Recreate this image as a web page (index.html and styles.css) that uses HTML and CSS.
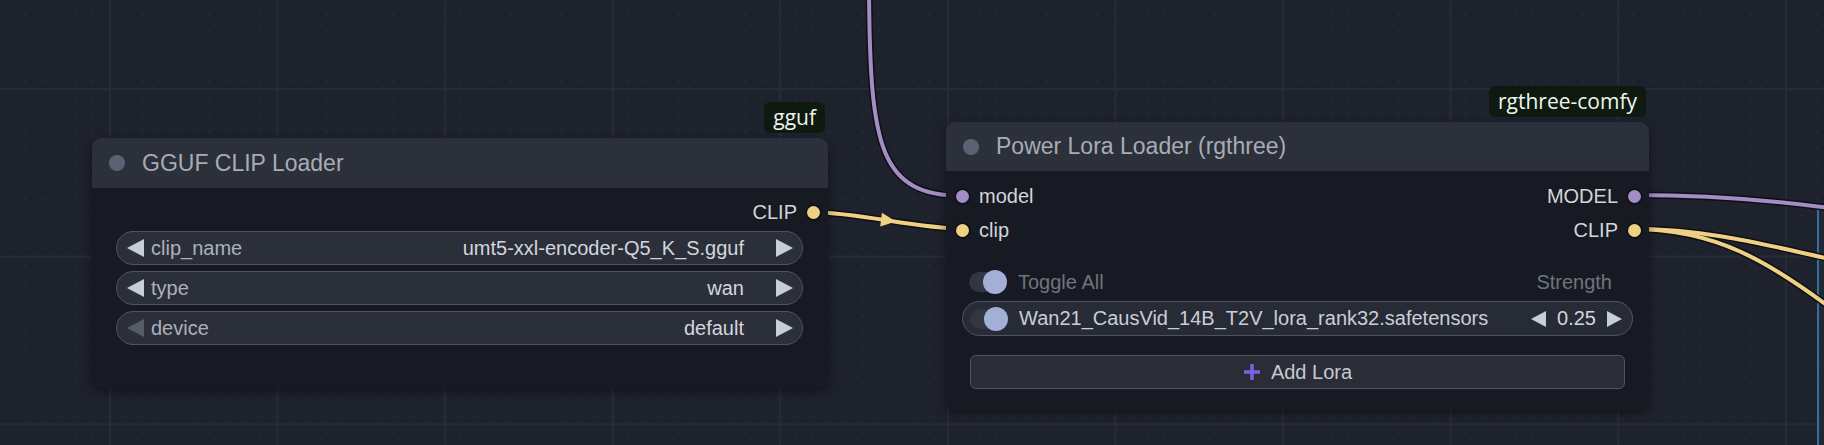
FILE: index.html
```html
<!DOCTYPE html>
<html lang="en">
<head>
    <meta charset="UTF-8">
    <meta name="viewport" content="width=device-width, initial-scale=1.0">
    <title>Graph canvas</title>
    <link rel="stylesheet" href="styles.css">
</head>
<body>

    <div class="canvas">

        <div class="group-edge"></div>

        <svg class="links" width="1824" height="445" viewBox="0 0 1824 445">
            <g class="link-shadow">
                <path d="M869 -10 C870 150, 880 195, 963 196"/>
                <path d="M813 212 C860 213, 916 228, 963 229"/>
                <path d="M1634 195 C1710 195, 1770 200, 1830 208"/>
                <path d="M1634 229 C1710 229, 1770 246, 1830 259"/>
                <path d="M1634 229 C1715 229, 1770 262, 1836 312"/>
            </g>
            <path class="link model" d="M869 -10 C870 150, 880 195, 963 196"/>
            <path class="link clip" d="M813 212 C860 213, 916 228, 963 229"/>
            <path class="link model" d="M1634 195 C1710 195, 1770 200, 1830 208"/>
            <path class="link clip" d="M1634 229 C1710 229, 1770 246, 1830 259"/>
            <path class="link clip" d="M1634 229 C1715 229, 1770 262, 1836 312"/>
            <polygon class="link-arrow" points="-7,-7 8,0 -7,7" transform="translate(888 220.5) rotate(7)"/>
        </svg>

        <!-- GGUF CLIP Loader -->
        <div class="node node-gguf">
            <div class="badge">gguf</div>
            <div class="node-title"><span class="title-dot"></span>GGUF CLIP Loader</div>
            <div class="node-body">
                <div class="slot-row">
                    <span class="slot out">CLIP <i class="dot clip"></i></span>
                </div>
                <div class="combo first">
                    <span class="arrow-l"></span>
                    <span class="combo-label">clip_name</span>
                    <span class="combo-value">umt5-xxl-encoder-Q5_K_S.gguf</span>
                    <span class="arrow-r"></span>
                </div>
                <div class="combo">
                    <span class="arrow-l"></span>
                    <span class="combo-label">type</span>
                    <span class="combo-value">wan</span>
                    <span class="arrow-r"></span>
                </div>
                <div class="combo">
                    <span class="arrow-l off"></span>
                    <span class="combo-label">device</span>
                    <span class="combo-value">default</span>
                    <span class="arrow-r"></span>
                </div>
            </div>
        </div>

        <!-- Power Lora Loader -->
        <div class="node node-lora">
            <div class="badge">rgthree-comfy</div>
            <div class="node-title"><span class="title-dot"></span>Power Lora Loader (rgthree)</div>
            <div class="node-body">
                <div class="slot-row">
                    <span class="slot in"><i class="dot model"></i> model</span>
                    <span class="slot out">MODEL <i class="dot model"></i></span>
                </div>
                <div class="slot-row">
                    <span class="slot in"><i class="dot clip"></i> clip</span>
                    <span class="slot out">CLIP <i class="dot clip"></i></span>
                </div>

                <div class="lora-head">
                    <span class="toggle"><i class="knob"></i></span>
                    <span class="dim">Toggle All</span>
                    <span class="dim strength">Strength</span>
                </div>

                <div class="lora-row">
                    <span class="toggle"><i class="knob"></i></span>
                    <span class="lora-name">Wan21_CausVid_14B_T2V_lora_rank32.safetensors</span>
                    <span class="lora-strength">
                        <span class="arrow-l small"></span>
                        <span>0.25</span>
                        <span class="arrow-r small"></span>
                    </span>
                </div>

                <div class="add-lora">
                    <svg width="18" height="18" viewBox="0 0 18 18"><path d="M9 1 V17 M1 9 H17" stroke="#7b61e0" stroke-width="3.5"/></svg>
                    Add Lora
                </div>
            </div>
        </div>

    </div>

</body>
</html>
```

FILE: styles.css
```css
body {
    margin: 0;
    overflow: hidden;
    font-family: "Liberation Sans", Arial, sans-serif;
    background-color: #1e222c;
}

.canvas {
    position: relative;
    width: 1824px;
    height: 445px;
    overflow: hidden;
    background-color: #1e222c;
    background-image:
        linear-gradient(to right, #272b36 2px, transparent 2px),
        linear-gradient(to bottom, #272b36 2px, transparent 2px),
        radial-gradient(circle, #242833 1px, transparent 1.6px);
    background-size: 167.6px 167.6px, 167.6px 167.6px, 16.76px 16.76px;
    background-position: 109px 0, 0 88px, 0 6px;
}

.group-edge {
    position: absolute;
    left: 1817px;
    top: 205px;
    width: 10px;
    height: 260px;
    border-left: 2px solid #3b6b96;
    background: #1f2a39;
}

/* links */

.links {
    position: absolute;
    left: 0;
    top: 0;
    pointer-events: none;
}

.links path {
    fill: none;
}

.link-shadow path {
    stroke: #0d0f14;
    stroke-width: 7;
}

.link {
    stroke-width: 4;
}

.link.model {
    stroke: #a28dc4;
}

.link.clip {
    stroke: #efd186;
}

.link-arrow {
    fill: #efd186;
}

/* nodes */

.node {
    position: absolute;
    display: flex;
    flex-direction: column;
    background: #171a22;
    border-radius: 9px;
    box-shadow: 0 3px 10px rgba(0, 0, 0, 0.45);
}

.node-gguf {
    left: 92px;
    top: 138px;
    width: 736px;
    height: 250px;
}

.node-lora {
    left: 946px;
    top: 122px;
    width: 703px;
    height: 288px;
}

.badge {
    position: absolute;
    right: 3px;
    bottom: calc(100% + 5px);
    height: 31px;
    padding: 0 9px;
    line-height: 30px;
    font-family: "Open Sans", "Noto Sans", sans-serif;
    font-size: 21px;
    color: #eef5ee;
    background: #0e1a10;
    border-radius: 6px;
}

.node-title {
    display: flex;
    align-items: center;
    height: 50px;
    flex-shrink: 0;
    background: #2c303b;
    border-radius: 9px 9px 0 0;
    font-size: 23px;
    color: #a8acb5;
}

.node-lora .node-title {
    height: 49px;
}

.title-dot {
    width: 16px;
    height: 16px;
    margin: 0 17px;
    border-radius: 50%;
    background: #5c6273;
}

.node-body {
    display: flex;
    flex-direction: column;
    padding: 7px 0 0;
}

.node-lora .node-body {
    padding-top: 8px;
}

.slot-row {
    display: flex;
    align-items: center;
    height: 34px;
    font-size: 20px;
    color: #d2d5db;
}

.slot {
    display: flex;
    align-items: center;
}

.slot.in {
    padding-left: 10px;
    gap: 10px;
}

.slot.out {
    margin-left: auto;
    padding-right: 8px;
    gap: 10px;
}

.dot {
    width: 13px;
    height: 13px;
    border-radius: 50%;
    box-shadow: 0 0 0 1.5px #0d0f14;
}

.dot.model {
    background: #a28dc4;
}

.dot.clip {
    background: #efd186;
}

/* combo widgets */

.combo {
    display: flex;
    align-items: center;
    height: 34px;
    margin: 0 25px 6px 24px;
    box-sizing: border-box;
    border: 1.5px solid #50545f;
    border-radius: 17px;
    background: #2b2f3a;
    font-size: 20px;
}

.combo.first {
    margin-top: 2px;
}

.arrow-l,
.arrow-r {
    width: 0;
    height: 0;
    border-style: solid;
}

.arrow-l {
    margin-left: 10px;
    border-width: 9px 17px 9px 0;
    border-color: transparent #c8cdd8 transparent transparent;
}

.arrow-l.off {
    border-right-color: #575c69;
}

.arrow-r {
    margin-right: 9px;
    border-width: 9px 0 9px 17px;
    border-color: transparent transparent transparent #c8cdd8;
}

.combo-label {
    margin-left: 7px;
    color: #adb1ba;
}

.combo-value {
    margin-left: auto;
    margin-right: 32px;
    color: #d3d6dc;
}

/* power lora widgets */

.lora-head {
    display: flex;
    align-items: center;
    height: 26px;
    margin: 22px 37px 6px 23px;
    font-size: 20px;
}

.dim {
    color: #6f747e;
}

.strength {
    margin-left: auto;
}

.toggle {
    position: relative;
    width: 38px;
    height: 20px;
    margin-right: 11px;
    border-radius: 10px;
    background: #323641;
}

.knob {
    position: absolute;
    right: 0;
    top: -2px;
    width: 24px;
    height: 24px;
    border-radius: 50%;
    background: #a2afd6;
}

.lora-row {
    display: flex;
    align-items: center;
    height: 35px;
    margin: 0 16px;
    padding-left: 7px;
    box-sizing: border-box;
    border: 1.5px solid #50545f;
    border-radius: 18px;
    background: #272b35;
    font-size: 20px;
}

.lora-name {
    color: #cbced5;
}

.lora-strength {
    display: flex;
    align-items: center;
    gap: 11px;
    margin-left: auto;
    margin-right: 10px;
    color: #d3d6dc;
}

.arrow-l.small {
    margin-left: 0;
    border-width: 8px 15px 8px 0;
}

.arrow-r.small {
    margin-right: 0;
    border-width: 8px 0 8px 15px;
}

.add-lora {
    display: flex;
    align-items: center;
    justify-content: center;
    gap: 10px;
    height: 34px;
    margin: 19px 24px 0;
    box-sizing: border-box;
    border: 1.5px solid #50545f;
    border-radius: 6px;
    background: #2a2d37;
    font-size: 20px;
    color: #c6c9d0;
}
```
